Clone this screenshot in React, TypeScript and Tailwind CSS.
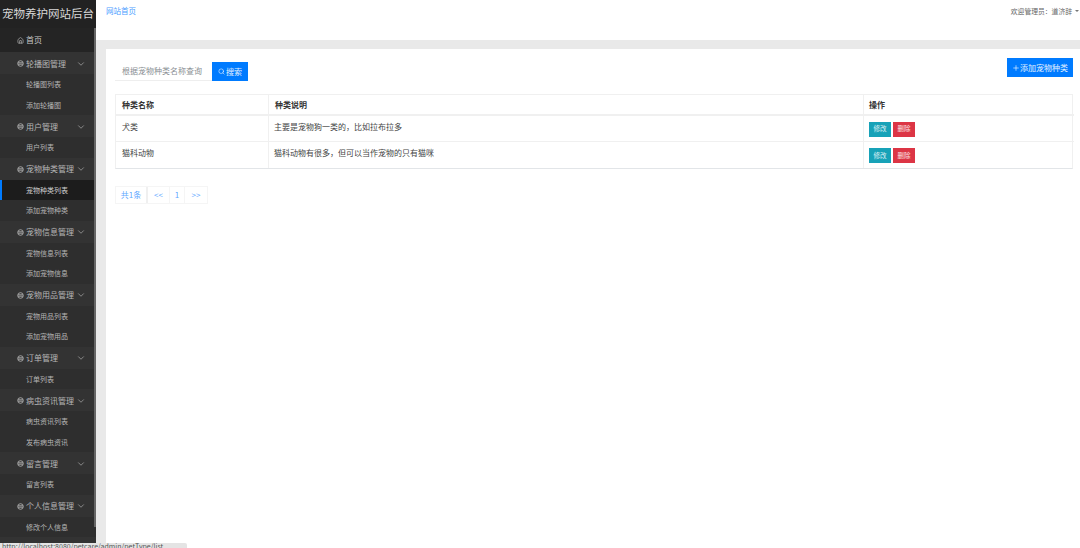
import { ChevronDown, Home, Plus, Search } from "lucide-react";

const groups = [
  { title: "轮播图管理", items: ["轮播图列表", "添加轮播图"] },
  { title: "用户管理", items: ["用户列表"] },
  { title: "宠物种类管理", items: ["宠物种类列表", "添加宠物种类"] },
  { title: "宠物信息管理", items: ["宠物信息列表", "添加宠物信息"] },
  { title: "宠物用品管理", items: ["宠物用品列表", "添加宠物用品"] },
  { title: "订单管理", items: ["订单列表"] },
  { title: "病虫资讯管理", items: ["病虫资讯列表", "发布病虫资讯"] },
  { title: "留言管理", items: ["留言列表"] },
  { title: "个人信息管理", items: ["修改个人信息"] },
];

const rows = [
  { name: "犬类", desc: "主要是宠物狗一类的，比如拉布拉多" },
  { name: "猫科动物", desc: "猫科动物有很多，但可以当作宠物的只有猫咪" },
];

const GroupIcon = () => (
  <svg width="7" height="7" viewBox="0 0 10 10" fill="none" stroke="currentColor" strokeWidth="1.2" className="shrink-0">
    <circle cx="5" cy="5" r="4" />
    <path d="M1.5 4h7M1.5 6h7" />
  </svg>
);

const App = () => {
  return (
    <div className="relative flex h-[548px] w-[1080px] overflow-hidden bg-white font-['Noto_Sans_CJK_SC','Noto_Sans',sans-serif] text-[8px] text-[#444]">
      <aside className="relative h-full w-[96px] shrink-0 bg-[#333333]">
        <div className="flex h-[28px] items-center whitespace-nowrap bg-[#222222] pl-[2px] text-[11.5px] text-[#d8d8d8]">宠物养护网站后台</div>
        <div className="flex h-[24px] items-center gap-[2px] bg-[#242424] pl-[17px] text-[#c8c8c8]">
          <Home size={7} />
          <span>首页</span>
        </div>
        {groups.map((group) => (
          <div key={group.title}>
            <div className="flex h-[22px] items-center gap-[2px] pl-[17px] pr-[11px] pt-[1px] text-[#b5b5b5]">
              <GroupIcon />
              <span className="flex-1 whitespace-nowrap">{group.title}</span>
              <ChevronDown size={10} className="-mr-[1px] shrink-0 text-[#999]" />
            </div>
            <div className="bg-[#2e2e2e]">
              {group.items.map((item) => {
                const active = item === "宠物种类列表";
                return (
                  <div
                    key={item}
                    className={
                      active
                        ? "flex h-[20.5px] items-center whitespace-nowrap border-l-2 border-[#007bff] bg-[#1c1c1c] pl-[24px] text-[7px] text-[#d0d0d0]"
                        : "flex h-[20.5px] items-center whitespace-nowrap pl-[26px] text-[7px] text-[#b5b5b5]"
                    }
                  >
                    {item}
                  </div>
                );
              })}
            </div>
          </div>
        ))}
        {/* sidebar scrollbar thumb */}
        <div className="absolute left-[94px] top-[28px] h-[499px] w-[2px] bg-[#666666]" />
      </aside>

      <main className="flex min-w-0 flex-1 flex-col">
        <header className="flex h-[40px] items-start justify-between pl-[10px] pr-[1px] pt-[5px]">
          <span className="text-[7.5px] text-[#4a9dff]">网站首页</span>
          <span className="mt-[1px] flex items-center gap-[1px] text-[6.8px] text-[#666]">
            欢迎管理员：道济辞
            <span className="ml-[2px] h-0 w-0 border-x-[2px] border-t-[2px] border-x-transparent border-t-[#777]" />
          </span>
        </header>
        <div className="h-[9px] bg-[#e9e9e9]" />
        <div className="flex-1 bg-[#e9e9e9] pl-[10px]">
          <div className="h-full bg-white pl-[9px] pr-[7px] pt-[9px]">
            <div className="flex h-[23px] items-start justify-between">
              <div className="mt-[4px] flex h-[19px]">
                <div className="flex w-[97px] items-center border-b border-[#eeeeee] pl-[7px] text-[#8a8f94]">根据宠物种类名称查询</div>
                <button className="flex w-[36px] items-center justify-center gap-[1px] bg-[#007bff] text-[8px] text-white/90">
                  <Search size={7} />
                  搜索
                </button>
              </div>
              <button className="flex h-[19px] w-[66px] items-center justify-center bg-[#007bff] text-[8px] text-white/90">
                <Plus size={8} />
                添加宠物种类
              </button>
            </div>

            <div className="mt-[13px] grid grid-cols-[153px_595px_210px] border border-[#f0f0f0] border-b-[#e2e5e8]">
              <div className="flex h-[21px] items-center border-b-2 border-r border-[#f0f0f0] pl-[6px] font-bold text-[#333]">种类名称</div>
              <div className="flex h-[21px] items-center border-b-2 border-r border-[#f0f0f0] pl-[6px] font-bold text-[#333]">种类说明</div>
              <div className="flex h-[21px] items-center border-b-2 border-[#f0f0f0] pl-[5px] font-bold text-[#333]">操作</div>
              {rows.map((row, index) => (
                <div key={row.name} className="contents">
                  <div className={index === 0 ? "h-[26px] border-b border-r border-[#f0f0f0] pl-[6px] pt-[5px]" : "h-[26px] border-r border-[#f0f0f0] pl-[6px] pt-[5px]"}>{row.name}</div>
                  <div className={index === 0 ? "h-[26px] border-b border-r border-[#f0f0f0] pl-[5px] pt-[5px]" : "h-[26px] border-r border-[#f0f0f0] pl-[5px] pt-[5px]"}>{row.desc}</div>
                  <div className={index === 0 ? "flex h-[26px] items-center gap-[2px] border-b border-[#f0f0f0] pl-[5px] pt-[1px]" : "flex h-[26px] items-center gap-[2px] pl-[5px] pt-[1px]"}>
                    <button className="flex h-[15px] w-[22px] items-center justify-center bg-[#17a2b8] text-[6.5px] text-white/85">修改</button>
                    <button className="flex h-[15px] w-[22px] items-center justify-center bg-[#dc3545] text-[6.5px] text-white/85">删除</button>
                  </div>
                </div>
              ))}
            </div>

            <div className="mt-[17px] flex h-[18px] w-fit items-center border border-[#f5f5f5] text-[#5fa8ff]">
              <span className="flex h-full w-[32px] items-center justify-center border-r-2 border-[#f0f0f0]">共1条</span>
              <span className="flex h-full w-[22px] items-center justify-center border-r border-[#f5f5f5]">&lt;&lt;</span>
              <span className="flex h-full w-[15px] items-center justify-center border-r border-[#f5f5f5]">1</span>
              <span className="flex h-full w-[22px] items-center justify-center">&gt;&gt;</span>
            </div>
          </div>
        </div>
      </main>

      {/* browser status bubble, cut by the window edge as in the reference */}
      <div className="absolute bottom-0 left-0 h-[5px] w-[187px] overflow-hidden rounded-tr-[2px] bg-[#e4e4e4] pl-[2px] text-[7px] leading-[7px] text-[#555]">
        http://localhost:8080/petcare/admin/petType/list
      </div>
    </div>
  );
};

export default App;
